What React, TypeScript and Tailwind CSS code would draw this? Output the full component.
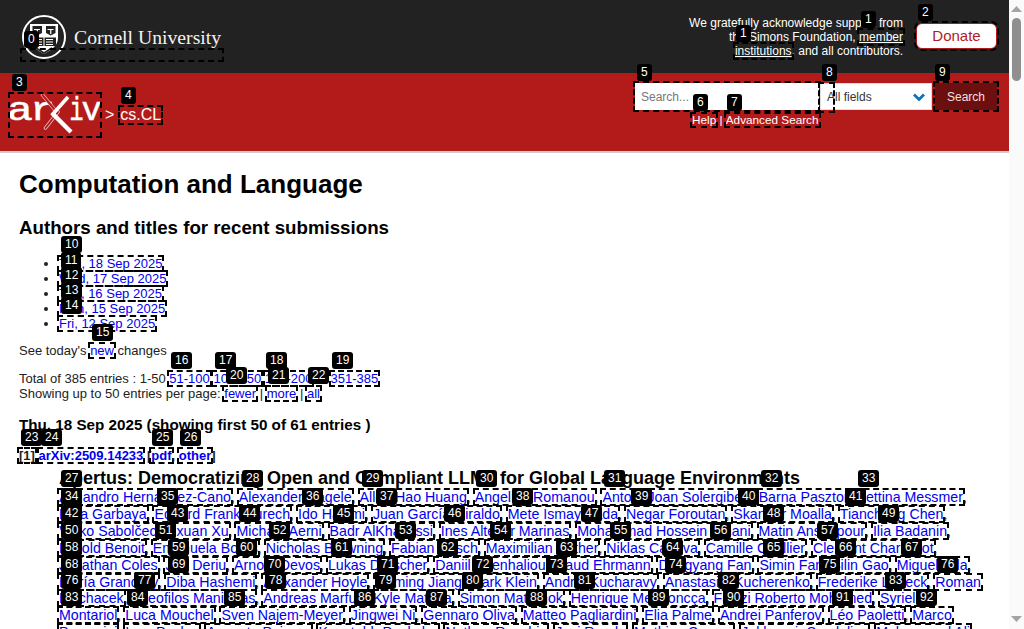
import React from "react";

const box = "outline-2 outline-dashed outline-black";
const tight = `inline-block ${box}`;
const link = `text-[#0000ee] inline-block leading-[13px] ${box}`;

const dates = ["Thu, 18 Sep 2025", "Wed, 17 Sep 2025", "Tue, 16 Sep 2025", "Mon, 15 Sep 2025", "Fri, 12 Sep 2025"];

// a "|" marks a name that wraps on to the next row in two boxes
const authors = [
  "Alejandro Hernández-Cano", "Alexander Hägele", "Allen Hao Huang", "Angelika Romanou", "Antoni-Joan Solergibert", "Barna Pasztor", "Bettina Messmer",
  "Dhia Garbaya", "Eduard Frank Ďurech", "Ido Hakimi", "Juan García Giraldo", "Mete Ismayilzada", "Negar Foroutan", "Skander Moalla", "Tiancheng Chen",
  "Vinko Sabolčec", "Yixuan Xu", "Michael Aerni", "Badr AlKhamissi", "Ines Altemir Marinas", "Mohammad Hossein Amani", "Matin Ansaripour", "Ilia Badanin",
  "Harold Benoit", "Emanuela Boros", "Nicholas Browning", "Fabian Bösch", "Maximilian Böther", "Niklas Canova", "Camille Challier", "Clement Charmillot",
  "Jonathan Coles", "Jan Deriu", "Arnout Devos", "Lukas Drescher", "Daniil Dzenhaliou", "Maud Ehrmann", "Dongyang Fan", "Simin Fan", "Silin Gao", "Miguel Gila",
  "María Grandury", "Diba Hashemi", "Alexander Hoyle", "Jiaming Jiang", "Mark Klein", "Andrei Kucharavy", "Anastasiia Kucherenko", "Frederike Lübeck", "Roman|Machacek",
  "Theofilos Manitaras", "Andreas Marfurt", "Kyle Matoba", "Simon Matrenok", "Henrique Mendoncça", "Fawzi Roberto Mohamed", "Syrielle|Montariol",
  "Luca Mouchel", "Sven Najem-Meyer", "Jingwei Ni", "Gennaro Oliva", "Matteo Pagliardini", "Elia Palme", "Andrei Panferov", "Léo Paoletti", "Marco|Passerini",
  "Ivan Pavlov", "Auguste Poiroux", "Kaustubh Ponkshe", "Nathan Ranchin", "Javi Rando", "Mathieu Sauser", "Jakhongir Saydaliev", "Muhammad Ali|Sayfiddinov",
];

// number tags that sit on top of the page
const tags = [
  { n: "0", c: "left-[24px] top-[31px]" },
  { n: "1", c: "left-[861px] top-[11px]" },
  { n: "1", c: "left-[736px] top-[25px]" },
  { n: "2", c: "left-[918px] top-[4px]" },
  { n: "3", c: "left-[12px] top-[74px]" },
  { n: "4", c: "left-[121px] top-[87px]" },
  { n: "5", c: "left-[637px] top-[64px]" },
  { n: "6", c: "left-[693px] top-[94px]" },
  { n: "7", c: "left-[727px] top-[94px]" },
  { n: "8", c: "left-[822px] top-[64px]" },
  { n: "9", c: "left-[935px] top-[64px]" },
  { n: "10", c: "left-[61px] top-[236px]" },
  { n: "11", c: "left-[61px] top-[252px]" },
  { n: "12", c: "left-[61px] top-[267px]" },
  { n: "13", c: "left-[61px] top-[282px]" },
  { n: "14", c: "left-[61px] top-[297px]" },
  { n: "15", c: "left-[92px] top-[324px]" },
  { n: "16", c: "left-[171px] top-[352px]" },
  { n: "17", c: "left-[215px] top-[352px]" },
  { n: "18", c: "left-[266px] top-[352px]" },
  { n: "19", c: "left-[332px] top-[352px]" },
  { n: "20", c: "left-[226px] top-[367px]" },
  { n: "21", c: "left-[268px] top-[367px]" },
  { n: "22", c: "left-[308px] top-[367px]" },
  { n: "23", c: "left-[21px] top-[429px]" },
  { n: "24", c: "left-[41px] top-[429px]" },
  { n: "25", c: "left-[152px] top-[429px]" },
  { n: "26", c: "left-[180px] top-[429px]" },
  { n: "27", c: "left-[61px] top-[470px]" },
  { n: "28", c: "left-[242px] top-[470px]" },
  { n: "29", c: "left-[362px] top-[470px]" },
  { n: "30", c: "left-[476px] top-[470px]" },
  { n: "31", c: "left-[604px] top-[470px]" },
  { n: "32", c: "left-[761px] top-[470px]" },
  { n: "33", c: "left-[858px] top-[470px]" },
  { n: "34", c: "left-[61px] top-[488px]" },
  { n: "35", c: "left-[157px] top-[488px]" },
  { n: "36", c: "left-[302px] top-[488px]" },
  { n: "37", c: "left-[376px] top-[488px]" },
  { n: "38", c: "left-[512px] top-[488px]" },
  { n: "39", c: "left-[631px] top-[488px]" },
  { n: "40", c: "left-[738px] top-[488px]" },
  { n: "41", c: "left-[845px] top-[488px]" },
  { n: "42", c: "left-[61px] top-[505px]" },
  { n: "43", c: "left-[167px] top-[505px]" },
  { n: "44", c: "left-[239px] top-[505px]" },
  { n: "45", c: "left-[333px] top-[505px]" },
  { n: "46", c: "left-[444px] top-[505px]" },
  { n: "47", c: "left-[581px] top-[505px]" },
  { n: "48", c: "left-[763px] top-[505px]" },
  { n: "49", c: "left-[878px] top-[505px]" },
  { n: "50", c: "left-[61px] top-[522px]" },
  { n: "51", c: "left-[155px] top-[522px]" },
  { n: "52", c: "left-[269px] top-[522px]" },
  { n: "53", c: "left-[395px] top-[522px]" },
  { n: "54", c: "left-[490px] top-[522px]" },
  { n: "55", c: "left-[610px] top-[522px]" },
  { n: "56", c: "left-[710px] top-[522px]" },
  { n: "57", c: "left-[817px] top-[522px]" },
  { n: "58", c: "left-[61px] top-[539px]" },
  { n: "59", c: "left-[168px] top-[539px]" },
  { n: "60", c: "left-[236px] top-[539px]" },
  { n: "61", c: "left-[331px] top-[539px]" },
  { n: "62", c: "left-[437px] top-[539px]" },
  { n: "63", c: "left-[556px] top-[539px]" },
  { n: "64", c: "left-[662px] top-[539px]" },
  { n: "65", c: "left-[763px] top-[539px]" },
  { n: "66", c: "left-[835px] top-[539px]" },
  { n: "67", c: "left-[901px] top-[539px]" },
  { n: "68", c: "left-[61px] top-[556px]" },
  { n: "69", c: "left-[168px] top-[556px]" },
  { n: "70", c: "left-[264px] top-[556px]" },
  { n: "71", c: "left-[377px] top-[556px]" },
  { n: "72", c: "left-[472px] top-[556px]" },
  { n: "73", c: "left-[546px] top-[556px]" },
  { n: "74", c: "left-[665px] top-[556px]" },
  { n: "75", c: "left-[819px] top-[556px]" },
  { n: "76", c: "left-[937px] top-[556px]" },
  { n: "76", c: "left-[61px] top-[572px]" },
  { n: "77", c: "left-[134px] top-[572px]" },
  { n: "78", c: "left-[265px] top-[572px]" },
  { n: "79", c: "left-[375px] top-[572px]" },
  { n: "80", c: "left-[462px] top-[572px]" },
  { n: "81", c: "left-[574px] top-[572px]" },
  { n: "82", c: "left-[718px] top-[572px]" },
  { n: "83", c: "left-[885px] top-[572px]" },
  { n: "83", c: "left-[61px] top-[589px]" },
  { n: "84", c: "left-[127px] top-[589px]" },
  { n: "85", c: "left-[224px] top-[589px]" },
  { n: "86", c: "left-[354px] top-[589px]" },
  { n: "87", c: "left-[426px] top-[589px]" },
  { n: "88", c: "left-[526px] top-[589px]" },
  { n: "89", c: "left-[648px] top-[589px]" },
  { n: "90", c: "left-[723px] top-[589px]" },
  { n: "91", c: "left-[832px] top-[589px]" },
  { n: "92", c: "left-[916px] top-[589px]" },
];

function CornellSeal() {
  return (
    <svg width="46" height="46" viewBox="0 0 46 46" fill="none" stroke="#fff" className="shrink-0">
      <circle cx="23" cy="23" r="21" strokeWidth="2" />
      <path d="M9 10h28v14c0 8-7 12-14 16C16 36 9 32 9 24z" fill="#fff" stroke="none" />
      <path d="M11.500 12h9.500v7l-4.750 2.500L11.500 19zM25 12h9.500v7l-4.750 2.500L25 19z" fill="#222" stroke="none" />
      <path d="M13 15.500h6M26.500 15.500h6M16.250 16v4M29.750 16v4" strokeWidth="1.200" />
      <path d="M11 23.500h24V32H11z" fill="#222" stroke="none" />
      <path d="M23 23v9M14 25.500h7M25 25.500h7M14 28h7M25 28h7M14 30.500h7M25 30.500h7" strokeWidth="1" />
      <path d="M15 34l8 5 8-5" stroke="#222" strokeWidth="1.500" />
    </svg>
  );
}

function ArxivLogo() {
  const letter = { fill: "#fff", stroke: "#fff", strokeWidth: 0.5, fontFamily: "Liberation Mono", fontSize: 33, lengthAdjust: "spacingAndGlyphs" as const };
  return (
    <svg width="90" height="42" viewBox="1 2 90 42" className="block">
      <text x="-2" y="28" textLength="26" {...letter}>a</text>
      <text x="21" y="28" textLength="25" {...letter}>r</text>
      <text x="60.500" y="28" textLength="14" {...letter}>i</text>
      <text x="72.500" y="28" textLength="20" {...letter}>v</text>
      <path d="M33.500 3L46 18M36.500 36L49 20" fill="none" stroke="#f4c4c4" strokeWidth="3.500" strokeLinecap="round" />
      <path d="M33.500 3L46 18M36.500 36L49 20" fill="none" stroke="#b31b1b" strokeWidth="2" strokeLinecap="round" />
      <path d="M59 5L43 23" stroke="#fff" strokeWidth="3.500" fill="none" />
      <path d="M43 21l19 19" stroke="#fff" strokeWidth="4.500" fill="none" />
    </svg>
  );
}

function TopBar() {
  return (
    <header className="relative flex h-[73px] items-start justify-between bg-[#222] pl-[21px] pr-[12px] text-white">
      <div className="flex items-center pt-[14px]">
        <CornellSeal />
        <span className="ml-[7px] font-['Liberation_Serif'] text-[19.700px] leading-[46px] text-[#f2f2f2]">Cornell University</span>
      </div>
      <span className={`absolute left-[22px] top-[50px] h-[10px] w-[200px] ${box}`} />
      <div className="flex items-start">
        <p className="mr-[13px] mt-[16px] text-right text-[12px] leading-[14px]">
          We gratefully acknowledge support from<br />
          the Simons Foundation, <a className={`underline ${box}`}>member<br />
          institutions</a>, and all contributors.
        </p>
        <a className={`mt-[23px] flex h-[26px] w-[81px] items-center justify-center rounded-md border border-[#b31b1b] bg-white text-[15px] text-[#b31b1b] ${box}`}>Donate</a>
      </div>
    </header>
  );
}

function SearchBar() {
  return (
    <div className="flex h-[78px] justify-between bg-[#b31b1b] pl-[10px] pr-[12px] text-white">
      <div className="flex items-start pt-[21px]">
        <a className={`block h-[42px] w-[90px] ${box}`}>
          <ArxivLogo />
        </a>
        <span className="ml-[5px] mt-[13px] text-[16px] leading-[16px]">&gt;</span>
        <a className={`ml-[6px] mt-[13px] text-[16px] leading-[16px] ${tight}`}>cs.CL</a>
      </div>
      <div className="flex flex-col pt-[10px]">
        <div className="flex h-[27px] items-stretch">
          <input placeholder="Search..." className={`h-[27px] w-[184px] bg-white px-[6px] text-[12px] text-black placeholder:text-[#777] ${box}`} />
          <div className="relative ml-[1px] flex w-[112px] items-center justify-between border border-[#ddd] bg-white pl-[6px] pr-[6px] text-[12px] text-[#363636]">
            All fields
            <svg width="12" height="8" viewBox="0 0 12 8" fill="none" stroke="#0f72b8" strokeWidth="2.800">
              <path d="M1 1.500l5 5 5-5" />
            </svg>
            <span className={`absolute -left-px top-0 h-[27px] w-[13px] ${box}`} />
          </div>
          <button className={`ml-[3px] w-[62px] bg-[#6c0f0f] text-[12px] text-[#f0e0e0] ${box}`}>Search</button>
        </div>
        <div className="ml-[57px] mt-[3px] text-[11.750px] leading-[14px]">
          <a className={`${tight} leading-[12px]`}>Help</a> | <a className={`${tight} leading-[12px]`}>Advanced Search</a>
        </div>
      </div>
    </div>
  );
}

function Listing() {
  return (
    <main className="px-[19px] pt-[16px] text-[13px] leading-[15px] text-[#222]">
      <h1 className="text-[26px] font-bold leading-[30px] text-black">Computation and Language</h1>
      <h2 className="mt-[17px] text-[18.720px] font-bold leading-[23px] text-black">Authors and titles for recent submissions</h2>
      <ul className="mt-[17px] list-disc pl-[40px]">
        {dates.map((d) => (
          <li key={d}><a className={link}>{d}</a></li>
        ))}
      </ul>
      <p className="mt-[12px]">See today's <a className={link}>new</a> changes</p>
      <p className="mt-[13px]">
        Total of 385 entries : 1-50 <a className={link}>51-100</a> <a className={link}>101-150</a> <a className={link}>151-200</a> ... <a className={link}>351-385</a><br />
        Showing up to 50 entries per page: <a className={link}>fewer</a> | <a className={link}>more</a> | <a className={link}>all</a>
      </p>
      <h3 className="mt-[15px] text-[15.210px] font-bold leading-[18px] text-black">Thu, 18 Sep 2025 (showing first 50 of 61 entries )</h3>
      <div className="mt-[14px] font-bold leading-[16px]">
        <a className={`${tight} leading-[13px]`}>[1]</a> <a className={link}>arXiv:2509.14233</a> [<a className={link}>pdf</a>, <a className={link}>other</a>]
      </div>
      <div className="mt-[3px] pl-[40px]">
        <div className="text-[18px] font-bold leading-[22px] text-black">Apertus: Democratizing Open and Compliant LLMs for Global Language Environments</div>
        <div className="pr-[4px] text-[14.200px] leading-[16.900px]">
          {authors.map((a, i) => (
            <React.Fragment key={a}>
              {a.split("|").map((part, j) => (
                <React.Fragment key={part}>
                  {j > 0 ? " " : ""}
                  <a className={`text-[#0000ee] inline-block leading-[14px] ${box}`}>{part}</a>
                </React.Fragment>
              ))}
              {i < authors.length - 1 ? ", " : ""}
            </React.Fragment>
          ))}
        </div>
      </div>
    </main>
  );
}

function ScrollTrack() {
  return (
    <aside className="flex w-[15px] shrink-0 flex-col items-center bg-[#fafafa]">
      <svg width="11" height="6" viewBox="0 0 11 6" className="mt-[6px] shrink-0"><path d="M5.500 0L11 6H0z" fill="#a3a3a3" /></svg>
      <div className="mt-[6px] h-[63px] w-[9px] shrink-0 rounded-full bg-[#8f8f8f]" />
      <svg width="11" height="6" viewBox="0 0 11 6" className="mb-[7px] mt-auto shrink-0"><path d="M5.500 6L11 0H0z" fill="#a3a3a3" /></svg>
    </aside>
  );
}

export default function App() {
  return (
    <div className="relative flex h-[629px] w-[1024px] overflow-hidden bg-white font-['Liberation_Sans',sans-serif]">
      <div className="min-w-0 flex-1">
        <TopBar />
        <SearchBar />
        <div className="h-[2px] bg-[#ccc]" />
        <Listing />
      </div>
      <ScrollTrack />
      {tags.map((t, i) => (
        <span key={i} className={`absolute rounded-[3px] bg-black px-[4px] text-[12px] leading-[17px] text-white ${t.c}`}>{t.n}</span>
      ))}
    </div>
  );
}
